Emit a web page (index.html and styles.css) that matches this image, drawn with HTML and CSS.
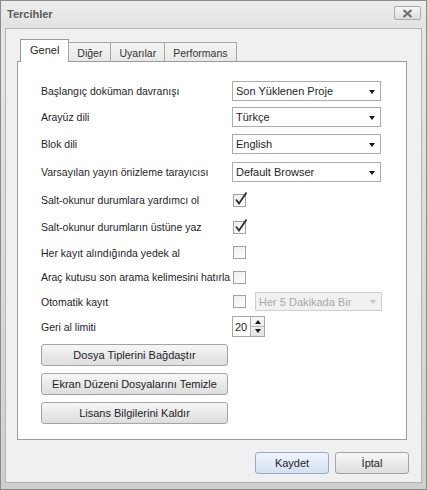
FILE: index.html
```html
<!DOCTYPE html>
<html lang="tr">
<head>
<meta charset="utf-8">
<title>Tercihler</title>
<link rel="stylesheet" href="styles.css">
</head>
<body>
<div class="window">
  <div class="titlebar">
    <span class="title">Tercihler</span>
    <button class="close" aria-label="Kapat">
      <svg width="11" height="9" viewBox="0 0 11 9"><path d="M1.5 1 L9.5 8 M9.5 1 L1.5 8" stroke="#6f6f6f" stroke-width="2.2" fill="none"/></svg>
    </button>
  </div>
  <div class="client">
    <div class="tabs">
      <div class="tab active">Genel</div>
      <div class="tab">Diğer</div>
      <div class="tab">Uyarılar</div>
      <div class="tab">Performans</div>
    </div>
    <div class="panel">
      <div class="form">
        <div class="label">Başlangıç doküman davranışı</div>
        <div class="field"><div class="combo"><span>Son Yüklenen Proje</span><i class="arrow"></i></div></div>

        <div class="label">Arayüz dili</div>
        <div class="field"><div class="combo"><span>Türkçe</span><i class="arrow"></i></div></div>

        <div class="label">Blok dili</div>
        <div class="field"><div class="combo"><span>English</span><i class="arrow"></i></div></div>

        <div class="label">Varsayılan yayın önizleme tarayıcısı</div>
        <div class="field"><div class="combo"><span>Default Browser</span><i class="arrow"></i></div></div>

        <div class="label">Salt-okunur durumlara yardımcı ol</div>
        <div class="field"><span class="check on"><svg width="16" height="16" viewBox="0 0 16 16"><path d="M3 7.5 L6 11.5 L13.5 0.5" stroke="#2e2e2e" stroke-width="1.8" fill="none"/></svg></span></div>

        <div class="label">Salt-okunur durumların üstüne yaz</div>
        <div class="field"><span class="check on"><svg width="16" height="16" viewBox="0 0 16 16"><path d="M3 7.5 L6 11.5 L13.5 0.5" stroke="#2e2e2e" stroke-width="1.8" fill="none"/></svg></span></div>

        <div class="label">Her kayıt alındığında yedek al</div>
        <div class="field"><span class="check"></span></div>

        <div class="label">Araç kutusu son arama kelimesini hatırla</div>
        <div class="field"><span class="check"></span></div>

        <div class="label">Otomatik kayıt</div>
        <div class="field gap"><span class="check"></span><div class="combo disabled"><span>Her 5 Dakikada Bir</span><i class="arrow"></i></div></div>

        <div class="label">Geri al limiti</div>
        <div class="field"><div class="spin"><span class="value">20</span><span class="spinbtns"><i class="up"></i><i class="down"></i></span></div></div>
      </div>
      <div class="actions">
        <button class="btn wide">Dosya Tiplerini Bağdaştır</button>
        <button class="btn wide">Ekran Düzeni Dosyalarını Temizle</button>
        <button class="btn wide">Lisans Bilgilerini Kaldır</button>
      </div>
    </div>
    <div class="footer">
      <button class="btn dlg primary">Kaydet</button>
      <button class="btn dlg">İptal</button>
    </div>
  </div>
</div>
</body>
</html>
```
FILE: styles.css
```css
* { box-sizing: border-box; }
html, body { margin: 0; padding: 0; }
body {
  width: 427px;
  height: 490px;
  font-family: "Liberation Sans", Arial, sans-serif;
  font-size: 10.5px;
  color: #1e1e1e;
  background: #ffffff;
}
.window {
  width: 427px;
  height: 490px;
  border: 1px solid #8c8c8c;
  background: linear-gradient(#e9e9e9, #dedede 40%, #cfcfcf);
  display: flex;
  flex-direction: column;
}
.titlebar {
  height: 27px;
  flex: none;
  display: flex;
  align-items: center;
  justify-content: space-between;
  padding: 0 5px 0 6px;
  background: linear-gradient(#ededed, #e2e2e2);
}
.title {
  font-weight: bold;
  font-size: 11px;
  color: #5a5a5a;
  margin-top: -1px;
}
.close {
  width: 27px;
  height: 14px;
  margin-top: -3px;
  padding: 0;
  border: 1px solid #ababab;
  border-radius: 2px;
  background: linear-gradient(#f6f6f6, #dcdcdc);
  display: flex;
  align-items: center;
  justify-content: center;
}
.client {
  flex: 1;
  margin: 0 4px 6px 4px;
  border: 1px solid #b4b4b4;
  background: #f0f0f0;
  display: flex;
  flex-direction: column;
}
.tabs {
  display: flex;
  align-items: flex-end;
  height: 22px;
  margin: 10px 0 0 11px;
  padding-left: 3px;
  position: relative;
  z-index: 1;
}
.tab {
  height: 19px;
  padding: 1px 8px 0;
  border: 1px solid #a6a6a6;
  border-bottom: none;
  margin-left: -1px;
  background: linear-gradient(#f4f4f4, #e8e8e8);
  display: flex;
  align-items: center;
  justify-content: center;
  color: #333;
  font-size: 10.5px;
}
.tab:first-child { margin-left: 0; }
.tab.active {
  height: 23px;
  margin-bottom: -1px;
  padding: 0 9px 2px;
  background: #ffffff;
  border-color: #9a9a9a;
  color: #1e1e1e;
  font-size: 11px;
}
.panel {
  flex: 1;
  margin: 0 14px 0 11px;
  border: 1px solid #9a9a9a;
  background: #ffffff;
  padding: 16px 0 0 23px;
}
.form {
  display: grid;
  grid-template-columns: 191px auto;
  grid-template-rows: 26px 26px 28px 28px 28px 26px 25px 24px 25px 25px;
  align-items: center;
}
.label { white-space: nowrap; }
.field { display: flex; align-items: center; }
.field.gap { gap: 9px; }
.combo {
  width: 149px;
  height: 20px;
  border: 1px solid #ababab;
  background: #fff;
  display: flex;
  align-items: center;
  justify-content: space-between;
  padding: 0 5px 0 3px;
  font-size: 11px;
}
.combo.disabled {
  width: 127px;
  height: 19px;
  border-color: #cfcfcf;
  background: #f1f1f1;
  color: #a9a9a9;
}
.arrow {
  width: 0;
  height: 0;
  border-left: 3.5px solid transparent;
  border-right: 3.5px solid transparent;
  border-top: 4px solid #1a1a1a;
  margin-top: 1px;
}
.combo.disabled .arrow { border-top-color: #c4c4c4; }
.check {
  position: relative;
  width: 13px;
  height: 13px;
  margin-left: 1px;
  border: 1px solid #a2a2a2;
  background: linear-gradient(135deg, #eeeeee, #ffffff);
}
.check svg {
  position: absolute;
  left: -1px;
  top: -3px;
}
.spin {
  height: 21px;
  display: flex;
  border: 1px solid #a8a8a8;
  background: #fff;
}
.spin .value {
  width: 17px;
  display: flex;
  align-items: center;
  padding-left: 2px;
  font-size: 11px;
}
.spinbtns {
  width: 14px;
  display: flex;
  flex-direction: column;
  border-left: 1px solid #b0b0b0;
  background: linear-gradient(#f7f7f7, #e4e4e4);
  padding: 1px 0;
}
.spinbtns i {
  flex: 1;
  display: flex;
  align-items: center;
  justify-content: center;
}
.spinbtns i.up { border-bottom: 1px solid #b8b8b8; }
.spinbtns i::before {
  content: "";
  border-left: 3px solid transparent;
  border-right: 3px solid transparent;
}
.spinbtns i.up::before { border-bottom: 4px solid #1a1a1a; }
.spinbtns i.down::before { border-top: 4px solid #1a1a1a; }
.actions {
  display: flex;
  flex-direction: column;
  gap: 7px;
  margin-top: 5px;
}
.btn {
  font-family: "Liberation Sans", Arial, sans-serif;
  font-size: 11px;
  color: #1e1e1e;
  height: 22px;
  padding: 0;
  border: 1px solid #a4a4a4;
  border-radius: 3px;
  background: linear-gradient(#f7f7f7, #e9e9e9 50%, #dedede);
}
.btn.wide { width: 187px; }
.footer {
  display: flex;
  justify-content: flex-end;
  gap: 6px;
  padding: 12px 12px 8px 0;
}
.btn.dlg { width: 74px; }
.btn.primary {
  border-color: #9aa8bf;
  background: linear-gradient(#f0f5fd, #e1eaf8 50%, #d4e0f3);
}
```
